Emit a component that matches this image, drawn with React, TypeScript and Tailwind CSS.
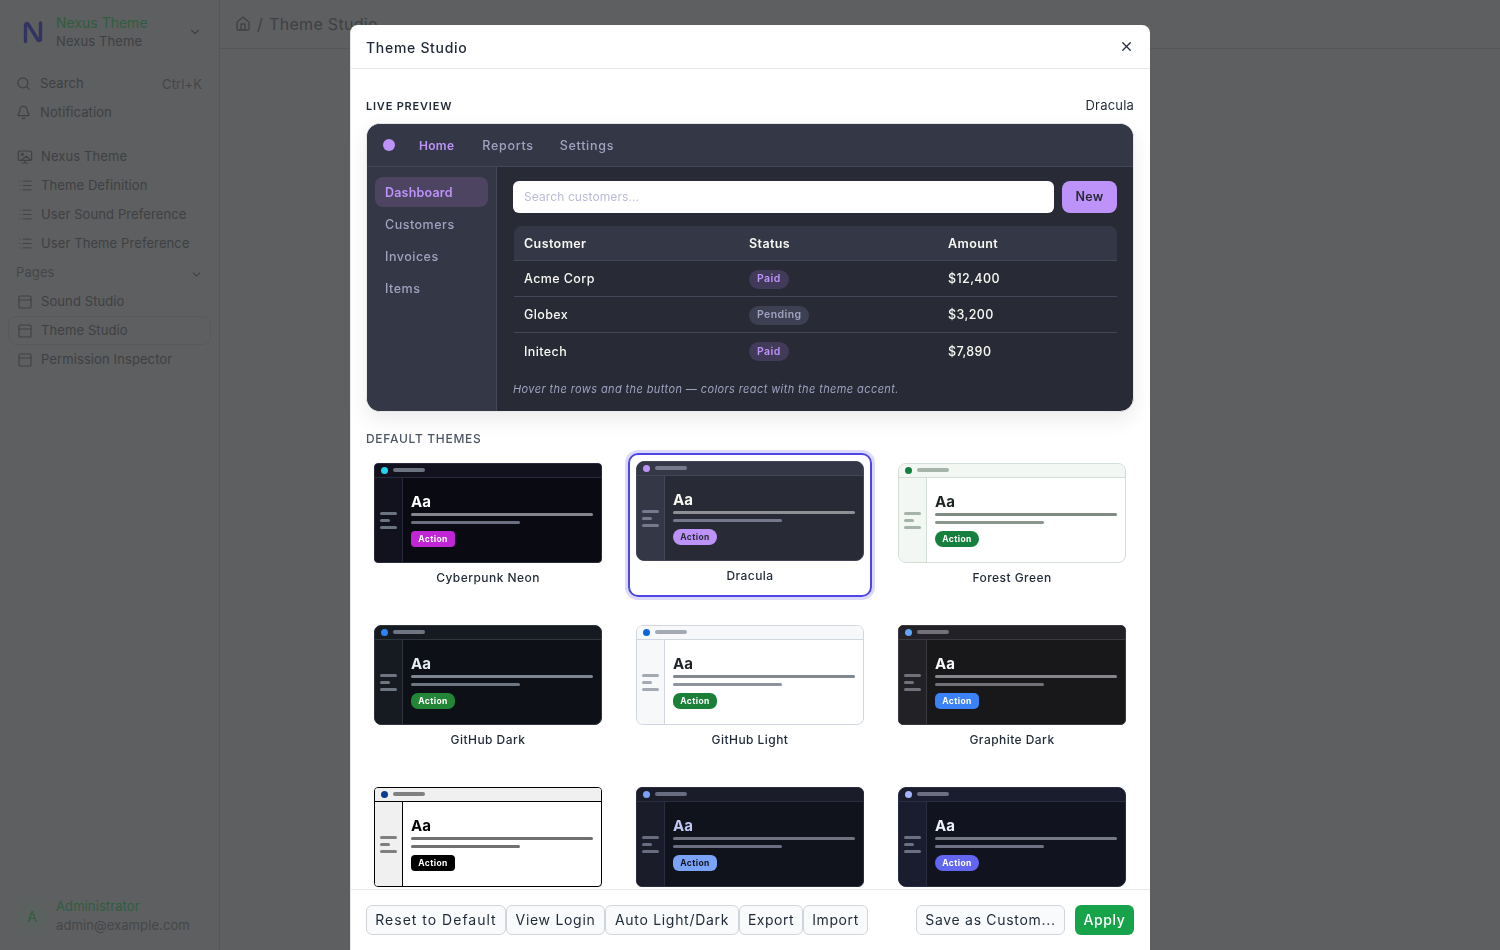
import { Bell, ChevronDown, House, List, PanelTop, Search, X } from "lucide-react";

type Theme = {
  name: string;
  body: string;
  panel: string;
  line: string;
  dot: string;
  bar: string;
  text: string;
  sub: string;
  sub2: string;
  accent: string;
  onAccent: string;
  radius: string;
};

// the last row is cut off by the footer, its labels are not visible
const themes: Theme[] = [
  { name: "Cyberpunk Neon", body: "bg-[#0a0a12]", panel: "bg-[#12121e]", line: "border-[#2a2a3e]", dot: "bg-[#22d3ee]", bar: "bg-[#6b7280]", text: "text-white", sub: "bg-[#85858d]", sub2: "bg-[#6b7080]", accent: "bg-[#c026d3]", onAccent: "text-white", radius: "rounded-[4px]" },
  { name: "Dracula", body: "bg-[#282a36]", panel: "bg-[#343746]", line: "border-[#44475a]", dot: "bg-[#bd93f9]", bar: "bg-[#777a8c]", text: "text-[#f8f8f2]", sub: "bg-[#8f9095]", sub2: "bg-[#75788c]", accent: "bg-[#bd93f9]", onAccent: "text-[#282a36]", radius: "rounded-[8px]" },
  { name: "Forest Green", body: "bg-white", panel: "bg-[#f3f7f3]", line: "border-[#d3ded6]", dot: "bg-[#15803d]", bar: "bg-[#a5b3a9]", text: "text-[#1c2520]", sub: "bg-[#7f8a82]", sub2: "bg-[#8a968c]", accent: "bg-[#15803d]", onAccent: "text-white", radius: "rounded-[8px]" },
  { name: "GitHub Dark", body: "bg-[#0d1117]", panel: "bg-[#161b22]", line: "border-[#30363d]", dot: "bg-[#2f81f7]", bar: "bg-[#6e7681]", text: "text-[#e6edf3]", sub: "bg-[#7d8590]", sub2: "bg-[#6e7681]", accent: "bg-[#238636]", onAccent: "text-white", radius: "rounded-[7px]" },
  { name: "GitHub Light", body: "bg-white", panel: "bg-[#f6f8fa]", line: "border-[#d0d7de]", dot: "bg-[#0969da]", bar: "bg-[#a3aab3]", text: "text-[#1f2328]", sub: "bg-[#82888f]", sub2: "bg-[#8c959f]", accent: "bg-[#1a7f37]", onAccent: "text-white", radius: "rounded-[7px]" },
  { name: "Graphite Dark", body: "bg-[#18181b]", panel: "bg-[#222226]", line: "border-[#3a3a40]", dot: "bg-[#60a5fa]", bar: "bg-[#71717a]", text: "text-[#fafafa]", sub: "bg-[#85858a]", sub2: "bg-[#71717a]", accent: "bg-[#3b82f6]", onAccent: "text-white", radius: "rounded-[5px]" },
  { name: "", body: "bg-white", panel: "bg-[#f0f0f0]", line: "border-black", dot: "bg-[#0b3d91]", bar: "bg-[#808080]", text: "text-black", sub: "bg-[#707070]", sub2: "bg-[#707070]", accent: "bg-black", onAccent: "text-white", radius: "rounded-[4px]" },
  { name: "", body: "bg-[#11131c]", panel: "bg-[#1a1c2a]", line: "border-[#2a2d3f]", dot: "bg-[#7aa2f7]", bar: "bg-[#686c80]", text: "text-[#c0caf5]", sub: "bg-[#70737f]", sub2: "bg-[#6b6e80]", accent: "bg-[#7aa2f7]", onAccent: "text-[#11131c]", radius: "rounded-[6px]" },
  { name: "", body: "bg-[#11131f]", panel: "bg-[#1a1d2e]", line: "border-[#2a2e42]", dot: "bg-[#a5b4fc]", bar: "bg-[#6b6f82]", text: "text-[#eef2ff]", sub: "bg-[#757885]", sub2: "bg-[#6f7285]", accent: "bg-[#6366f1]", onAccent: "text-white", radius: "rounded-[8px]" },
];

const rows = [
  { name: "Acme Corp", status: "Paid", amount: "$12,400" },
  { name: "Globex", status: "Pending", amount: "$3,200" },
  { name: "Initech", status: "Paid", amount: "$7,890" },
];

function NexusLogo() {
  return (
    <svg width="22" height="24" viewBox="0 0 22 24" fill="none" stroke="#8088ff" strokeWidth="3.4" strokeLinecap="round" strokeLinejoin="round">
      <path d="M3.5 21.5V5c0-1.5 1.5-2 2.500-1l10 16c1 1 2.500.5 2.500-1V3" />
    </svg>
  );
}

function MonitorImage() {
  return (
    <svg width="16" height="16" viewBox="0 0 24 24" fill="none" stroke="currentColor" strokeWidth="1.8" strokeLinecap="round" strokeLinejoin="round">
      <rect x="2" y="3" width="20" height="14" rx="2" />
      <circle cx="8" cy="8" r="1.6" />
      <path d="m6 17 8-6 6 5M12 17v4M8 21h8" />
    </svg>
  );
}

function SidebarItem({ icon, label, active }: { icon: React.ReactNode; label: string; active?: boolean }) {
  return (
    <div className={`flex h-[29px] items-center gap-[8px] rounded-[8px] text-[13px] tracking-[0.1px] text-[#a3a9b3] ${active ? "border border-[#e8eaee] pl-[8px]" : "pl-[9px]"}`}>
      <span className="flex w-[16px] justify-center">{icon}</span>
      {label}
    </div>
  );
}

function Sidebar() {
  return (
    <aside className="flex h-full w-[220px] shrink-0 flex-col border-r border-[#dfe3e8] bg-[#f8fafc] px-[8px]">
      <div className="mb-[5px] flex h-[64px] items-center pl-[14px] pr-[9px]">
        <NexusLogo />
        <div className="ml-[12px] flex-1 leading-[19px]">
          <div className="text-[14px] text-[#80f5a8]">Nexus Theme</div>
          <div className="text-[13px] tracking-[0.1px] text-[#a3a9b3]">Nexus Theme</div>
        </div>
        <ChevronDown size={14} className="text-[#a3a9b3]" />
      </div>
      <div className="flex h-[29px] items-center gap-[9px] pl-[8px] pr-[9px] text-[13px] tracking-[0.1px] text-[#a3a9b3]">
        <Search size={15} />
        <span className="flex-1">Search</span>
        <span className="mt-[3px] text-[#b4b9c1]">Ctrl+K</span>
      </div>
      <div className="flex h-[29px] items-center gap-[9px] pl-[8px] text-[13px] tracking-[0.1px] text-[#a3a9b3]">
        <Bell size={15} />
        Notification
      </div>
      <div className="mt-[15px] flex flex-col">
        <SidebarItem icon={<MonitorImage />} label="Nexus Theme" />
        <SidebarItem icon={<List size={15} strokeWidth={1.5} />} label="Theme Definition" />
        <SidebarItem icon={<List size={15} strokeWidth={1.5} />} label="User Sound Preference" />
        <SidebarItem icon={<List size={15} strokeWidth={1.5} />} label="User Theme Preference" />
        <div className="flex h-[29px] items-center justify-between pl-[8px] pr-[8px] text-[13px] tracking-[0.1px] text-[#b4b9c1]">
          Pages
          <ChevronDown size={13} className="mt-[3px] text-[#a3a9b3]" />
        </div>
        <SidebarItem icon={<PanelTop size={16} strokeWidth={1.7} />} label="Sound Studio" />
        <SidebarItem icon={<PanelTop size={16} strokeWidth={1.7} />} label="Theme Studio" active />
        <SidebarItem icon={<PanelTop size={16} strokeWidth={1.7} />} label="Permission Inspector" />
      </div>
      <div className="mt-auto flex items-center gap-[8px] pb-[15px] pl-[8px]">
        <div className="flex h-[32px] w-[32px] items-center justify-center rounded-full bg-[#eefff6] text-[14px] text-[#80f5a8]">A</div>
        <div className="text-[13px] leading-[19px] tracking-[0.1px]">
          <div className="text-[#80f5a8]">Administrator</div>
          <div className="text-[#b4b9c1]">admin@example.com</div>
        </div>
      </div>
    </aside>
  );
}

function ThemeCard({ theme, selected }: { theme: Theme; selected?: boolean }) {
  return (
    <div className={`h-[144px] rounded-[10px] border-2 p-[6px] ${selected ? "-translate-y-[2px] border-[#4f46e5] shadow-[0_0_0_3px_rgba(79,70,229,0.2)]" : "border-transparent"}`}>
      <div className={`flex h-[100px] flex-col overflow-hidden border ${theme.line} ${theme.body} ${theme.radius}`}>
        <div className={`box-content flex h-[13px] shrink-0 items-center gap-[5px] border-b px-[6px] ${theme.line} ${theme.panel}`}>
          <span className={`h-[7px] w-[7px] rounded-full ${theme.dot}`} />
          <span className={`mb-[1px] h-[4px] w-[32px] rounded-full ${theme.bar}`} />
        </div>
        <div className="flex flex-1">
          <div className={`flex w-[28px] shrink-0 flex-col justify-center gap-[4px] border-r pl-[5px] pr-[5px] ${theme.line} ${theme.panel}`}>
            <span className={`h-[3px] w-full rounded-full ${theme.bar}`} />
            <span className={`h-[3px] w-[10px] rounded-full ${theme.bar}`} />
            <span className={`h-[3px] w-full rounded-full ${theme.bar}`} />
          </div>
          <div className="flex flex-1 flex-col justify-center px-[8px]">
            <div className={`text-[15px] font-bold leading-[17px] ${theme.text}`}>Aa</div>
            <div className={`mt-[3px] h-[3px] w-full rounded-full ${theme.sub}`} />
            <div className={`mt-[5px] h-[3px] w-[60%] rounded-full ${theme.sub2}`} />
            <div className={`mt-[7px] flex h-[16px] w-[44px] items-center justify-center text-[8.5px] font-bold tracking-[0.4px] ${theme.radius} ${theme.accent} ${theme.onAccent}`}>Action</div>
          </div>
        </div>
      </div>
      <div className="mt-[6px] text-center text-[12px] font-medium leading-[18px] tracking-[0.45px] text-[#1f2937]">{theme.name}</div>
    </div>
  );
}

function LivePreview() {
  return (
    <div className="mt-[7px] h-[289px] overflow-hidden rounded-[14px] border border-[#e5e7eb] bg-[#282a36] shadow-[0_8px_20px_rgba(0,0,0,0.08)]">
      <div className="flex h-[43px] items-center border-b border-[#44475a] bg-[#343746] pl-[16px] text-[12.5px] tracking-[0.7px]">
        <span className="h-[12px] w-[12px] rounded-full bg-[#bd93f9]" />
        <span className="ml-[24px] mt-[2px] text-[12px] font-semibold tracking-[0.3px] text-[#bd93f9]">Home</span>
        <span className="ml-[28px] mt-[2px] font-medium text-[#9ea3c0]">Reports</span>
        <span className="ml-[26px] mt-[2px] font-medium text-[#9ea3c0]">Settings</span>
      </div>
      <div className="flex h-[245px]">
        <div className="flex w-[130px] shrink-0 flex-col gap-[2px] border-r border-[#44475a] bg-[#343746] px-[8px] pb-[10px] pt-[10px] text-[12.5px] font-medium tracking-[0.5px] text-[#9ea3c0]">
          <div className="flex h-[30px] items-center rounded-[8px] bg-[#4c4460] pl-[10px] pt-[2px] font-semibold tracking-[0.2px] text-[#bd93f9]">Dashboard</div>
          <div className="flex h-[30px] items-center pl-[10px] pt-[2px]">Customers</div>
          <div className="flex h-[30px] items-center pl-[10px] pt-[2px]">Invoices</div>
          <div className="flex h-[30px] items-center pl-[10px] pt-[2px]">Items</div>
        </div>
        <div className="flex-1 pl-[16px] pr-[16px] pt-[14px]">
          <div className="flex gap-[8px]">
            <div className="flex h-[32px] flex-1 items-center rounded-[6px] bg-white pl-[11px] text-[12px] tracking-[0.1px] text-[#b9bcd6]">Search customers...</div>
            <div className="flex h-[32px] w-[55px] items-center justify-center rounded-[8px] bg-[#bd93f9] text-[12.5px] font-semibold tracking-[0.3px] text-[#282a36]">New</div>
          </div>
          <div className="ml-[1px] mt-[13px] text-[12.5px] tracking-[0.4px] text-[#f8f8f2]">
            <div className="grid h-[35px] grid-cols-[225px_199px_1fr] items-center rounded-t-[8px] border-b border-[#44475a] bg-[#343746] pl-[10px] pt-[2px] font-semibold">
              <span>Customer</span>
              <span>Status</span>
              <span>Amount</span>
            </div>
            {rows.map((row) => (
              <div key={row.name} className="grid h-[36px] grid-cols-[225px_199px_1fr] items-center border-b border-[#44475a] pl-[10px] pt-[2px] font-medium last:border-b-0">
                <span>{row.name}</span>
                <span className="-mt-[1px]">
                  <span className={`inline-flex h-[19px] items-center rounded-full px-[8px] text-[10.5px] font-semibold ${row.status === "Paid" ? "bg-[#423a59] text-[#bd93f9]" : "bg-[#3d4052] text-[#9ea3c0]"}`}>{row.status}</span>
                </span>
                <span>{row.amount}</span>
              </div>
            ))}
          </div>
          <div className="mt-[12px] text-[11px] italic tracking-[0.4px] text-[#9ea3c0]">Hover the rows and the button — colors react with the theme accent.</div>
        </div>
      </div>
    </div>
  );
}

// widths come straight from the reference, the buttons sit edge to edge
const footerLeft = [
  { label: "Reset to Default", className: "w-[140px] tracking-[1px]" },
  { label: "View Login", className: "w-[99px] tracking-[0.7px]" },
  { label: "Auto Light/Dark", className: "w-[134px] tracking-[0.7px]" },
  { label: "Export", className: "w-[64px] tracking-[0.5px]" },
  { label: "Import", className: "w-[65px] tracking-[0.6px]" },
];

function FooterButton({ label, className }: { label: string; className: string }) {
  return (
    <button className={`h-[30px] rounded-[6px] border border-[#d1d5db] bg-[#f8fafc] pb-[1px] text-[14px] text-[#1f2937] ${className}`}>{label}</button>
  );
}

export default function App() {
  return (
    <div className="relative flex h-[950px] w-[1500px] overflow-hidden bg-[#f8fafc] font-['Inter',sans-serif]">
      <Sidebar />
      <main className="flex-1">
        <div className="flex h-[49px] items-center gap-[6px] border-b border-[#dfe3e8] pl-[15px] text-[16px] tracking-[0.3px] text-[#a3a9b3]">
          <House size={16} />
          <span>/</span>
          <span>Theme Studio</span>
        </div>
      </main>

      {/* Backdrop + modal */}
      <div className="absolute inset-0 flex justify-center bg-black/[0.62] pt-[25px] backdrop-blur-[0.5px]">
        <div className="flex h-[925px] w-[800px] flex-col overflow-hidden rounded-t-[8px] border-l border-[#e5e7eb] bg-white">
          <div className="flex h-[44px] shrink-0 items-center justify-between border-b border-[#e5e7eb] pl-[15px] pr-[16px] text-[14px] font-medium tracking-[0.7px] text-[#1f2937]">
            <span className="mt-[2px]">Theme Studio</span>
            <X size={15} className="text-[#1f2937]" />
          </div>
          <div className="min-h-0 flex-1 overflow-hidden pl-[15px] pr-[16px] pt-[26px]">
            <div className="flex h-[21px] items-center justify-between">
              <span className="mt-[2px] text-[11px] font-semibold tracking-[0.8px] text-[#1f2937]">LIVE PREVIEW</span>
              <span className="text-[13px] tracking-[0.2px] text-[#1f2937]">Dracula</span>
            </div>
            <LivePreview />
            <div className="mt-[18px] text-[12px] font-medium leading-[18px] tracking-[0.7px] text-[#4b5563]">DEFAULT THEMES</div>
            <div className="mt-[7px] grid grid-cols-[244px_244px_244px] gap-[18px]">
              {themes.map((theme, i) => (
                <ThemeCard key={i} theme={theme} selected={theme.name === "Dracula"} />
              ))}
            </div>
          </div>
          <div className="flex h-[61px] shrink-0 items-start justify-between border-t border-[#e5e7eb] pl-[15px] pr-[16px] pt-[15px]">
            <div className="flex">
              {footerLeft.map((item) => (
                <FooterButton key={item.label} label={item.label} className={item.className} />
              ))}
            </div>
            <div className="flex gap-[10px]">
              <FooterButton label="Save as Custom..." className="w-[149px] tracking-[0.7px]" />
              <button className="h-[30px] w-[59px] rounded-[6px] bg-[#16a34a] pb-[1px] text-[14px] font-medium tracking-[0.6px] text-white">Apply</button>
            </div>
          </div>
        </div>
      </div>
    </div>
  );
}
